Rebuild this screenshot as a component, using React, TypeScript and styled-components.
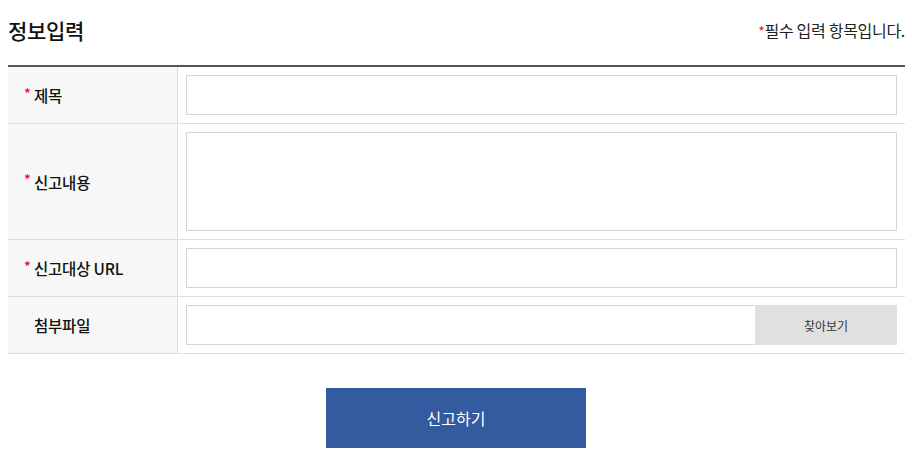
import React, { FunctionComponent } from "react";
import styled, { createGlobalStyle } from "styled-components";

const GlobalStyle = createGlobalStyle`
  html, body {
    margin: 0;
    padding: 0;
    background: #ffffff;
  }
  body {
    font-family: "Noto Sans CJK KR", "Noto Sans", sans-serif;
    color: #222222;
  }
  * {
    box-sizing: border-box;
  }
`;

const Wrap = styled.div`
  width: 912px;
  padding: 0 7px 0 8px;
`;

const Header = styled.div`
  display: flex;
  align-items: center;
  justify-content: space-between;
  height: 60px;
  margin-bottom: 5px;
`;

const Title = styled.h2`
  margin: 0;
  font-size: 21px;
  font-weight: 500;
  color: #111111;
  letter-spacing: -0.3px;
`;

const Note = styled.p`
  margin: 0;
  font-size: 16px;
  color: #222222;
  letter-spacing: -0.3px;
`;

const Star = styled.span`
  color: #e8112d;
  font-size: 14px;
`;

const Table = styled.div`
  border-top: 2px solid #555555;
`;

const Row = styled.div`
  display: grid;
  grid-template-columns: 170px 1fr;
  border-bottom: 1px solid #dddddd;
`;

const LabelCell = styled.div`
  display: flex;
  align-items: center;
  background: #f7f7f7;
  border-right: 1px solid #dddddd;
  padding-left: 16px;
  font-size: 15.5px;
  font-weight: 500;
  color: #111111;
  letter-spacing: -0.2px;
`;

const LabelStar = styled.span<{ $hidden?: boolean }>`
  display: inline-block;
  width: 10px;
  color: #e8112d;
  font-size: 14px;
  margin-top: -5px;
  visibility: ${(p) => (p.$hidden ? "hidden" : "visible")};
`;

const FieldCell = styled.div`
  display: flex;
  padding: 8px;
`;

const TextInput = styled.input`
  width: 100%;
  height: 40px;
  border: 1px solid #d5d5d5;
  background: #ffffff;
  outline: none;
  padding: 0 10px;
  font-family: inherit;
`;

const TextArea = styled.textarea`
  width: 100%;
  height: 99px;
  border: 1px solid #d5d5d5;
  background: #ffffff;
  outline: none;
  resize: none;
  padding: 10px;
  font-family: inherit;
  display: block;
`;

const FileBox = styled.div`
  display: flex;
  width: 100%;
  height: 40px;
`;

const FileName = styled.input`
  flex: 1;
  height: 40px;
  border: 1px solid #d5d5d5;
  border-right: none;
  background: #ffffff;
  outline: none;
`;

const FindButton = styled.button`
  width: 142px;
  height: 40px;
  border: none;
  background: #e0e0e0;
  font-family: inherit;
  font-size: 12px;
  color: #333333;
  cursor: pointer;
`;

const Actions = styled.div`
  display: flex;
  justify-content: center;
  margin-top: 34px;
  padding-right: 1px;
`;

const SubmitButton = styled.button`
  width: 260px;
  height: 60px;
  border: none;
  background: #345b9f;
  color: #ffffff;
  font-family: inherit;
  font-size: 16px;
  cursor: pointer;
`;

const Label: FunctionComponent<{ text: string; required?: boolean }> = ({ text, required }) => (
  <LabelCell>
    <LabelStar $hidden={!required}>*</LabelStar>
    {text}
  </LabelCell>
);

const App: FunctionComponent = () => {
  return (
    <>
      <GlobalStyle />
      <Wrap>
        <Header>
          <Title>정보입력</Title>
          <Note>
            <Star>*</Star>필수 입력 항목입니다.
          </Note>
        </Header>
        <Table>
          <Row>
            <Label text="제목" required />
            <FieldCell>
              <TextInput type="text" />
            </FieldCell>
          </Row>
          <Row>
            <Label text="신고내용" required />
            <FieldCell>
              <TextArea />
            </FieldCell>
          </Row>
          <Row>
            <Label text="신고대상 URL" required />
            <FieldCell>
              <TextInput type="text" />
            </FieldCell>
          </Row>
          <Row>
            <Label text="첨부파일" />
            <FieldCell>
              <FileBox>
                <FileName type="text" readOnly />
                <FindButton type="button">찾아보기</FindButton>
              </FileBox>
            </FieldCell>
          </Row>
        </Table>
        <Actions>
          <SubmitButton type="button">신고하기</SubmitButton>
        </Actions>
      </Wrap>
    </>
  );
};

export default App;
